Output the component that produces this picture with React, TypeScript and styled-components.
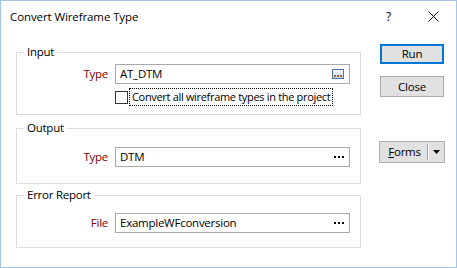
import React from "react";
import styled, { createGlobalStyle } from "styled-components";

const Global = createGlobalStyle`
  html, body { margin: 0; padding: 0; background: #fff; }
  body {
    font-family: "Open Sans", "Noto Sans", sans-serif;
    font-size: 11px;
    letter-spacing: -0.25px;
    color: #000;
  }
`;

const Window = styled.div`
  width: 457px;
  height: 268px;
  box-sizing: border-box;
  border: 1px solid #a4c6e6;
  background: #fff;
  display: flex;
  flex-direction: column;
`;

const TitleBar = styled.div`
  flex: none;
  height: 31px;
  display: flex;
  align-items: center;
  padding-left: 9px;
`;

const Title = styled.div`
  flex: 1;
  font-size: 11.5px;
  letter-spacing: -0.1px;
`;

const TitleButton = styled.div`
  width: 45px;
  height: 31px;
  display: flex;
  align-items: center;
  justify-content: center;
  font-size: 12px;
`;

const Body = styled.div`
  display: flex;
  padding: 12px 0 0 15px;
`;

const LeftColumn = styled.div`
  width: 345px;
  display: flex;
  flex-direction: column;
`;

const Group = styled.fieldset<{ $mt: number; $pt: number; $pb: number }>`
  margin: ${(p) => p.$mt}px 0 0 0;
  padding: ${(p) => p.$pt}px 10px ${(p) => p.$pb}px 0;
  border: 1px solid #dcdcdc;
  min-width: 0;
`;

const Legend = styled.legend`
  margin-left: 7px;
  padding: 0 3px;
  line-height: 16px;
  font-size: 11.5px;
`;

const GroupContent = styled.div`
  display: flex;
  flex-direction: column;
  gap: 5px;
`;

const Row = styled.div`
  display: grid;
  grid-template-columns: 91px 1fr;
  column-gap: 7px;
  align-items: center;
`;

const Label = styled.div`
  text-align: right;
  color: #800000;
  line-height: 16px;
  font-size: 11.5px;
`;

const Field = styled.div`
  height: 20px;
  box-sizing: border-box;
  border: 1px solid #a8a8a8;
  display: flex;
  align-items: center;
  padding: 0 5px 0 4px;
  background: #fff;
`;

const FieldText = styled.span`
  flex: 1;
  line-height: 16px;
  font-size: 11.5px;
`;

const CheckRow = styled.div`
  display: flex;
  align-items: center;
  margin-left: 98px;
  gap: 2px;
`;

const CheckBox = styled.span`
  flex: none;
  width: 13px;
  height: 13px;
  box-sizing: border-box;
  border: 1px solid #333;
  background: #fff;
`;

const CheckLabel = styled.span`
  white-space: nowrap;
  line-height: 14px;
  padding: 0 1px;
  letter-spacing: -0.32px;
  outline: 1px dotted #000;
  border: 1px solid transparent;
`;

const RightColumn = styled.div`
  display: flex;
  flex-direction: column;
  margin-left: 19px;
`;

const Button = styled.div<{ $primary?: boolean; $mt: number; $h: number }>`
  box-sizing: border-box;
  width: 64px;
  height: ${(p) => p.$h}px;
  margin-top: ${(p) => p.$mt}px;
  background: #e1e1e1;
  border: ${(p) => (p.$primary ? "2px solid #0078d7" : "1px solid #adadad")};
  display: flex;
  align-items: center;
  justify-content: center;
  line-height: 16px;
  font-size: 11.5px;
`;

const SplitButton = styled.div`
  box-sizing: border-box;
  width: 66px;
  height: 22px;
  margin-top: 44px;
  margin-left: -1px;
  background: #e1e1e1;
  border: 1px solid #adadad;
  display: flex;
  align-items: center;
`;

const SplitMain = styled.span`
  flex: 1;
  text-align: center;
  line-height: 16px;
  padding-left: 2px;
  font-size: 11.5px;
`;

const Underline = styled.span`
  text-decoration: underline;
`;

const SplitDivider = styled.span`
  width: 1px;
  height: 16px;
  background: #a0a0a0;
  border-right: 1px solid #fff;
`;

const SplitArrow = styled.span`
  width: 15px;
  display: flex;
  align-items: center;
  justify-content: center;
`;

const BrowseIcon = () => (
  <svg width="12" height="10" viewBox="0 0 12 10">
    <defs>
      <linearGradient id="bg" x1="0" y1="0" x2="0" y2="1">
        <stop offset="0" stopColor="#ffffff" />
        <stop offset="1" stopColor="#b9cfea" />
      </linearGradient>
    </defs>
    <rect x="0.5" y="0.5" width="11" height="9" fill="url(#bg)" stroke="#4b74aa" />
    <rect x="2" y="6" width="2" height="2" fill="#a86a20" />
    <rect x="5" y="6" width="2" height="2" fill="#a86a20" />
    <rect x="8" y="6" width="2" height="2" fill="#a86a20" />
  </svg>
);

const Dots = () => (
  <svg width="10" height="3" viewBox="0 0 10 3">
    <rect x="0" y="0" width="2" height="2" fill="#000" />
    <rect x="4" y="0" width="2" height="2" fill="#000" />
    <rect x="8" y="0" width="2" height="2" fill="#000" />
  </svg>
);

export default function App() {
  return (
    <>
      <Global />
      <Window>
        <TitleBar>
          <Title>Convert Wireframe Type</Title>
          <TitleButton>?</TitleButton>
          <TitleButton>
            <svg width="11" height="11" viewBox="0 0 11 11">
              <path d="M0.5 0.5 L10.5 10.5 M10.5 0.5 L0.5 10.5" stroke="#000" strokeWidth="1" />
            </svg>
          </TitleButton>
        </TitleBar>
        <Body>
          <LeftColumn>
            <Group $mt={0} $pt={4} $pb={9}>
              <Legend>Input</Legend>
              <GroupContent>
                <Row>
                  <Label>Type</Label>
                  <Field>
                    <FieldText>AT_DTM</FieldText>
                    <BrowseIcon />
                  </Field>
                </Row>
                <CheckRow>
                  <CheckBox />
                  <CheckLabel>Convert all wireframe types in the project</CheckLabel>
                </CheckRow>
              </GroupContent>
            </Group>
            <Group $mt={5} $pt={11} $pb={16}>
              <Legend>Output</Legend>
              <GroupContent>
                <Row>
                  <Label>Type</Label>
                  <Field>
                    <FieldText>DTM</FieldText>
                    <Dots />
                  </Field>
                </Row>
              </GroupContent>
            </Group>
            <Group $mt={3} $pt={10} $pb={14}>
              <Legend>Error Report</Legend>
              <GroupContent>
                <Row>
                  <Label>File</Label>
                  <Field>
                    <FieldText>ExampleWFconversion</FieldText>
                    <Dots />
                  </Field>
                </Row>
              </GroupContent>
            </Group>
          </LeftColumn>
          <RightColumn>
            <Button $primary $mt={0} $h={20}>Run</Button>
            <Button $mt={12} $h={21}>Close</Button>
            <SplitButton>
              <SplitMain>
                <Underline>F</Underline>orms
              </SplitMain>
              <SplitDivider />
              <SplitArrow>
                <svg width="7" height="4" viewBox="0 0 7 4">
                  <path d="M0 0 H7 L3.5 4 Z" fill="#000" />
                </svg>
              </SplitArrow>
            </SplitButton>
          </RightColumn>
        </Body>
      </Window>
    </>
  );
}
